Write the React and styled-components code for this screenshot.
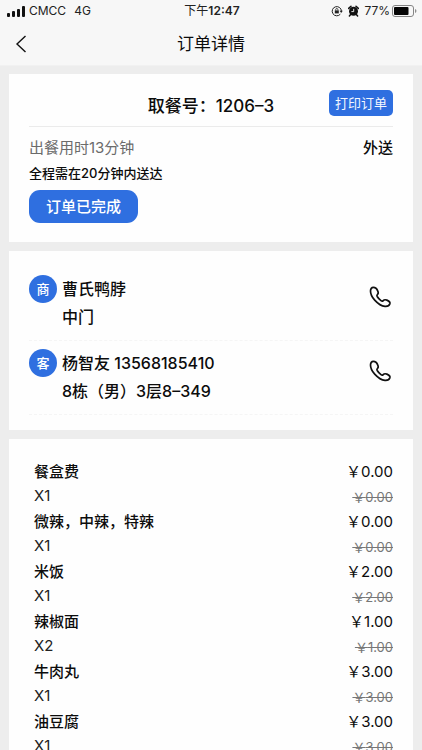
import React from "react";
import styled, { createGlobalStyle } from "styled-components";

const BLUE = "#2f6fe0";

const GlobalStyle = createGlobalStyle`
  * { box-sizing: border-box; }
  body {
    margin: 0;
    background: #ededed;
    color: #0c0c0c;
    font-family: Inter, "Noto Sans CJK SC", sans-serif;
    font-size: 15px;
  }
  button, h1, h2, p, ul, dl { margin: 0; padding: 0; }
  button { font-family: inherit; border: 0; cursor: pointer; }
`;

const Screen = styled.div`
  display: flex;
  flex-direction: column;
  height: 100vh;
`;

const TopArea = styled.header`
  flex: none;
  background: #f7f7f7;
  border-bottom: 1px solid #f1f1f1;
`;

const StatusBar = styled.div`
  display: grid;
  grid-template-columns: 1fr auto 1fr;
  align-items: center;
  height: 22px;
  padding: 0 5px 0 7px;
  font-size: 12px;
  line-height: 22px;
  color: #222;
`;

const StatusGroup = styled.div`
  display: flex;
  align-items: center;
  justify-content: ${(p) => (p.$end ? "flex-end" : "flex-start")};
  gap: ${(p) => (p.$end ? 5 : 4)}px;
`;

const Network = styled.span`
  margin-left: 4px;
`;

const Clock = styled.time`
  font-weight: 600;
  span { font-weight: 400; }
`;

const Power = styled.span`
  display: flex;
  align-items: center;
  gap: 2px;
`;

const NavBar = styled.div`
  display: grid;
  grid-template-columns: 44px 1fr 44px;
  align-items: center;
  height: 43px;
`;

const BackButton = styled.button`
  display: flex;
  align-items: center;
  height: 43px;
  padding-left: 15px;
  background: none;
  color: #111;
`;

const Title = styled.h1`
  font-size: 17px;
  font-weight: 400;
  line-height: 24px;
  text-align: center;
`;

const Content = styled.main`
  flex: 1;
  min-height: 0;
  overflow-y: auto;
  scrollbar-width: none;
  display: flex;
  flex-direction: column;
  gap: 9px;
  padding: 8px 9px;
`;

const Card = styled.section`
  flex: none;
  background: #fefefe;
  padding: ${(p) => p.$padding};
`;

const PickupRow = styled.div`
  display: grid;
  grid-template-columns: 64px 1fr 64px;
  align-items: center;
  height: 53px;
  border-bottom: 1px solid #ebebeb;
`;

const PickupNumber = styled.h2`
  grid-column: 2;
  padding-top: 12px;
  font-size: 17px;
  font-weight: 500;
  line-height: 24px;
  text-align: center;
  white-space: nowrap;
`;

const PrintButton = styled.button`
  height: 26px;
  margin-top: 6px;
  border-radius: 5px;
  background: ${BLUE};
  color: #f4f8ff;
  font-size: 13px;
  line-height: 26px;
  white-space: nowrap;
`;

const TimeRow = styled.div`
  display: flex;
  justify-content: space-between;
  padding-top: 9px;
  line-height: 24px;
`;

const PrepTime = styled.span`
  color: #6b6b6b;
`;

const Strong = styled.span`
  font-weight: 500;
`;

const Limit = styled.p`
  padding: 3px 0 5px;
  font-size: 13px;
  font-weight: 500;
  line-height: 20px;
`;

const StateButton = styled.button`
  height: 33px;
  margin-top: 2px;
  padding: 0 17px;
  border-radius: 11px;
  background: ${BLUE};
  color: #fff;
  font-size: 15px;
  font-weight: 500;
  line-height: 33px;
`;

const Contact = styled.div`
  display: grid;
  grid-template-columns: 28px 1fr 24px;
  column-gap: 5px;
  height: 66px;
  margin-bottom: 8px;
  border-bottom: 1px dashed #f5f5f5;
`;

const Avatar = styled.span`
  width: 28px;
  height: 28px;
  border-radius: 50%;
  background: ${BLUE};
  color: #fff;
  font-size: 13px;
  font-weight: 500;
  line-height: 28px;
  text-align: center;
`;

const ContactText = styled.div`
  font-size: 16px;
  font-weight: 500;
  line-height: 28px;
`;

const CallButton = styled.button`
  display: flex;
  height: 24px;
  margin-top: 11px;
  background: none;
  color: #111;
`;

const Items = styled.ul`
  list-style: none;
`;

const Item = styled.li`
  display: grid;
  grid-template-columns: 1fr auto;
  grid-template-rows: 25px 25px;
  align-items: center;
`;

const ItemName = styled.span`
  font-weight: 500;
`;

const Price = styled.span`
  text-align: right;
`;

const Quantity = styled.span`
  color: #222;
`;

const OldPrice = styled.del`
  padding-top: 2px;
  color: #777;
  font-size: 13px;
  text-align: right;
`;

function SignalIcon() {
  return (
    <svg width="18" height="11" viewBox="0 0 18 11" fill="#111" aria-hidden="true">
      <rect x="0" y="7" width="3" height="4" rx="1" />
      <rect x="5" y="5" width="3" height="6" rx="1" />
      <rect x="10" y="3" width="3" height="8" rx="1" />
      <rect x="15" y="0" width="3" height="11" rx="1" />
    </svg>
  );
}

function RotationLockIcon() {
  return (
    <svg width="12" height="12" viewBox="0 0 12 12" fill="none" stroke="#222" aria-hidden="true">
      <path d="M9.3 9.2A4.6 4.6 0 1 1 10.4 6.2" />
      <path d="M8.6 5.8h3.2L10.2 8z" fill="#222" stroke="none" />
      <rect x="3.8" y="5.4" width="4" height="3" fill="#222" stroke="none" />
      <path d="M4.7 5.5V4.6a1.1 1.1 0 0 1 2.2 0v.9" strokeWidth=".8" />
    </svg>
  );
}

function AlarmIcon() {
  return (
    <svg width="11" height="12" viewBox="0 0 11 12" aria-hidden="true">
      <circle cx="5.5" cy="6.3" r="4.5" fill="#111" />
      <path d="M.7 3.4 3 1.2M10.3 3.4 8 1.2M2.6 9.6 1.4 11M8.4 9.6l1.2 1.4" stroke="#111" strokeWidth="1.5" strokeLinecap="round" />
      <path d="M5.7 3.8v2.8H3.4" fill="none" stroke="#f7f7f7" strokeWidth=".9" />
    </svg>
  );
}

function BatteryIcon() {
  return (
    <svg width="25" height="12" viewBox="0 0 25 12" aria-hidden="true">
      <rect x=".5" y=".5" width="21" height="11" rx="2.5" fill="none" stroke="#858585" />
      <rect x="2" y="2" width="14.5" height="8" rx="1" fill="#050505" />
      <path d="M23.2 4v4c1.6-.7 1.6-3.3 0-4z" fill="#777" />
    </svg>
  );
}

function PhoneIcon() {
  return (
    <svg width="24" height="24" viewBox="0 0 24 24" fill="none" stroke="currentColor" strokeWidth="1.7" strokeLinejoin="round" aria-hidden="true">
      <path d="M4.3 1.3C2.7 1.3 1.500 2.900 1.500 5.100c0 3.200 1.700 6.400 4.200 9.100 2.800 3.100 6.600 5.900 10.300 6.200 2.300.2 4.300-.9 4.900-2.700.4-1.500-1.100-2.900-3-3.600-1.700-.6-2.900-.4-3.700.5-.7.8-1.300.8-2.200.1-1.500-1.200-2.900-2.700-3.800-4.200-.5-.9-.4-1.500.3-2.100.9-.7.9-2 .2-3.500C7.900 2.600 6.300 1.300 4.300 1.300z" />
    </svg>
  );
}

const contacts = [
  { tag: "商", name: "曹氏鸭脖", place: "中门" },
  { tag: "客", name: "杨智友 13568185410", place: "8栋（男）3层8–349" },
];

const items = [
  { name: "餐盒费", count: 1, price: "0.00" },
  { name: "微辣，中辣，特辣", count: 1, price: "0.00" },
  { name: "米饭", count: 1, price: "2.00" },
  { name: "辣椒面", count: 2, price: "1.00" },
  { name: "牛肉丸", count: 1, price: "3.00" },
  { name: "油豆腐", count: 1, price: "3.00" },
];

export default function App() {
  return (
    <Screen lang="zh-CN">
      <GlobalStyle />
      <TopArea>
        <StatusBar>
          <StatusGroup>
            <SignalIcon />
            <span>CMCC</span>
            <Network>4G</Network>
          </StatusGroup>
          <Clock><span>下午</span>12:47</Clock>
          <StatusGroup $end>
            <RotationLockIcon />
            <AlarmIcon />
            <Power>
              <span>77%</span>
              <BatteryIcon />
            </Power>
          </StatusGroup>
        </StatusBar>
        <NavBar>
          <BackButton aria-label="返回">
            <svg width="12" height="18" viewBox="0 0 12 18" fill="none" stroke="currentColor" strokeWidth="1.4" aria-hidden="true">
              <path d="M10.5 1 2 9l8.5 8" />
            </svg>
          </BackButton>
          <Title>订单详情</Title>
        </NavBar>
      </TopArea>

      <Content>
        <Card $padding="0 20px 19px">
          <PickupRow>
            <PickupNumber>取餐号：1206–3</PickupNumber>
            <PrintButton>打印订单</PrintButton>
          </PickupRow>
          <TimeRow>
            <PrepTime>出餐用时13分钟</PrepTime>
            <Strong>外送</Strong>
          </TimeRow>
          <Limit>全程需在20分钟内送达</Limit>
          <StateButton>订单已完成</StateButton>
        </Card>

        <Card $padding="24px 20px 7px">
          {contacts.map((c) => (
            <Contact key={c.tag}>
              <Avatar>{c.tag}</Avatar>
              <ContactText>
                <p>{c.name}</p>
                <p>{c.place}</p>
              </ContactText>
              <CallButton aria-label={`拨打 ${c.name}`}>
                <PhoneIcon />
              </CallButton>
            </Contact>
          ))}
        </Card>

        <Card $padding="19px 20px 20px 25px">
          <Items>
            {items.map((item) => (
              <Item key={item.name}>
                <ItemName>{item.name}</ItemName>
                <Price>￥{item.price}</Price>
                <Quantity>X{item.count}</Quantity>
                <OldPrice>￥{item.price}</OldPrice>
              </Item>
            ))}
          </Items>
        </Card>
      </Content>
    </Screen>
  );
}
